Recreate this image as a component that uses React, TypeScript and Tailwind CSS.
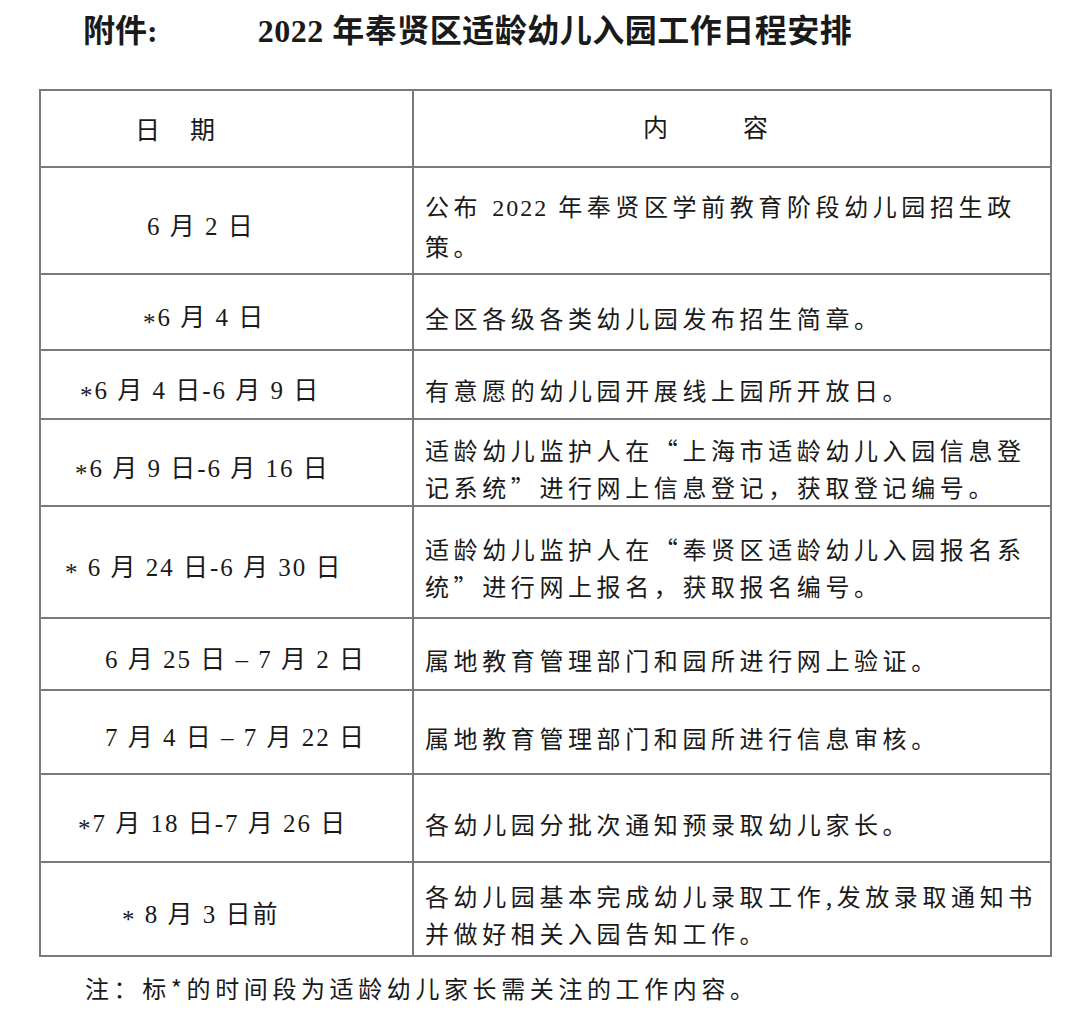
const rows = [
  { h: "h-[107px]", pl: "pl-[106px]", date: "6 月 2 日", lines: ["公布 2022 年奉贤区学前教育阶段幼儿园招生政", "策。"] },
  { h: "h-[76px]", pl: "pl-[102px]", date: "*6 月 4 日", lines: ["全区各级各类幼儿园发布招生简章。"] },
  { h: "h-[69px]", pl: "pl-[39px]", date: "*6 月 4 日-6 月 9 日", lines: ["有意愿的幼儿园开展线上园所开放日。"] },
  { h: "h-[87px]", pl: "pl-[34px]", date: "*6 月 9 日-6 月 16 日", lines: ["适龄幼儿监护人在“上海市适龄幼儿入园信息登", "记系统”进行网上信息登记，获取登记编号。"] },
  { h: "h-[112px]", pl: "pl-[24px]", date: "* 6 月 24 日-6 月 30 日", lines: ["适龄幼儿监护人在“奉贤区适龄幼儿入园报名系", "统”进行网上报名，获取报名编号。"] },
  { h: "h-[72px]", pl: "pl-[64px]", date: "6 月 25 日 – 7 月 2 日", lines: ["属地教育管理部门和园所进行网上验证。"] },
  { h: "h-[84px]", pl: "pl-[64px]", date: "7 月 4 日 – 7 月 22 日", lines: ["属地教育管理部门和园所进行信息审核。"] },
  { h: "h-[88px]", pl: "pl-[37px]", date: "*7 月 18 日-7 月 26 日", lines: ["各幼儿园分批次通知预录取幼儿家长。"] },
  { h: "h-[94px]", pl: "pl-[81px]", date: "* 8 月 3 日前", lines: ["各幼儿园基本完成幼儿录取工作,发放录取通知书", "并做好相关入园告知工作。"] },
];

const serif = "font-['Liberation_Serif','Noto_Sans_CJK_SC',serif]";
const cjk = "font-['Noto_Sans_CJK_SC','Liberation_Serif',sans-serif]";

function DateText({ text }: { text: string }) {
  const star = text.startsWith("*");
  return (
    <span>
      {star && <span className="relative top-[5px]">*</span>}
      {star ? text.slice(1) : text}
    </span>
  );
}

function Line({ text }: { text: string }) {
  // digits in the body are set in the serif face, a little tighter
  const parts = text.split(/(\d+)/);
  return (
    <div>
      {parts.map((p, k) =>
        /^\d+$/.test(p) ? (
          <span key={k} className={`${serif} tracking-[2px]`}>
            {p}
          </span>
        ) : (
          <span key={k}>{p}</span>
        )
      )}
    </div>
  );
}

export default function App() {
  return (
    <div className="w-[1080px] h-[1018px] bg-white text-[#1a1a1a] overflow-hidden">
      {/* title */}
      <div className="flex items-center h-[60px] pt-[2px] font-bold text-[32px] leading-none font-['Liberation_Serif','Noto_Sans_CJK_SC',serif]">
        <span className="ml-[83px]">附件:</span>
        <span className="ml-[100px] tracking-[0.5px]">2022 年奉贤区适龄幼儿入园工作日程安排</span>
      </div>

      <div className="ml-[39px] mt-[29px] w-[1013px] border-2 border-[#7a7a7a]">
        <div className="flex h-[75px]">
          <div className={`w-[373px] border-r-2 border-[#7a7a7a] flex items-center pl-[94px] gap-[30px] text-[25px] ${cjk}`}>
            <span>日</span>
            <span>期</span>
          </div>
          <div className={`flex-1 flex items-center pl-[229px] gap-[75px] text-[25px] pb-[4px] ${cjk}`}>
            <span>内</span>
            <span>容</span>
          </div>
        </div>
        {rows.map((r, i) => (
          <div key={i} className={`flex border-t-2 border-[#7a7a7a] ${r.h}`}>
            <div className={`w-[373px] border-r-2 border-[#7a7a7a] flex items-center pt-[12px] whitespace-pre text-[25px] tracking-[2px] ${serif} ${r.pl}`}>
              <DateText text={r.date} />
            </div>
            <div className={`flex-1 flex flex-col justify-center pl-[11px] pt-[10px] text-[24px] leading-[37px] tracking-[4.6px] whitespace-nowrap ${cjk}`}>
              {r.lines.map((l, j) => (
                <Line key={j} text={l} />
              ))}
            </div>
          </div>
        ))}
      </div>

      <div className={`ml-[85px] mt-[13px] text-[24px] tracking-[4.6px] ${cjk}`}>
        注：标*的时间段为适龄幼儿家长需关注的工作内容。
      </div>
    </div>
  );
}
